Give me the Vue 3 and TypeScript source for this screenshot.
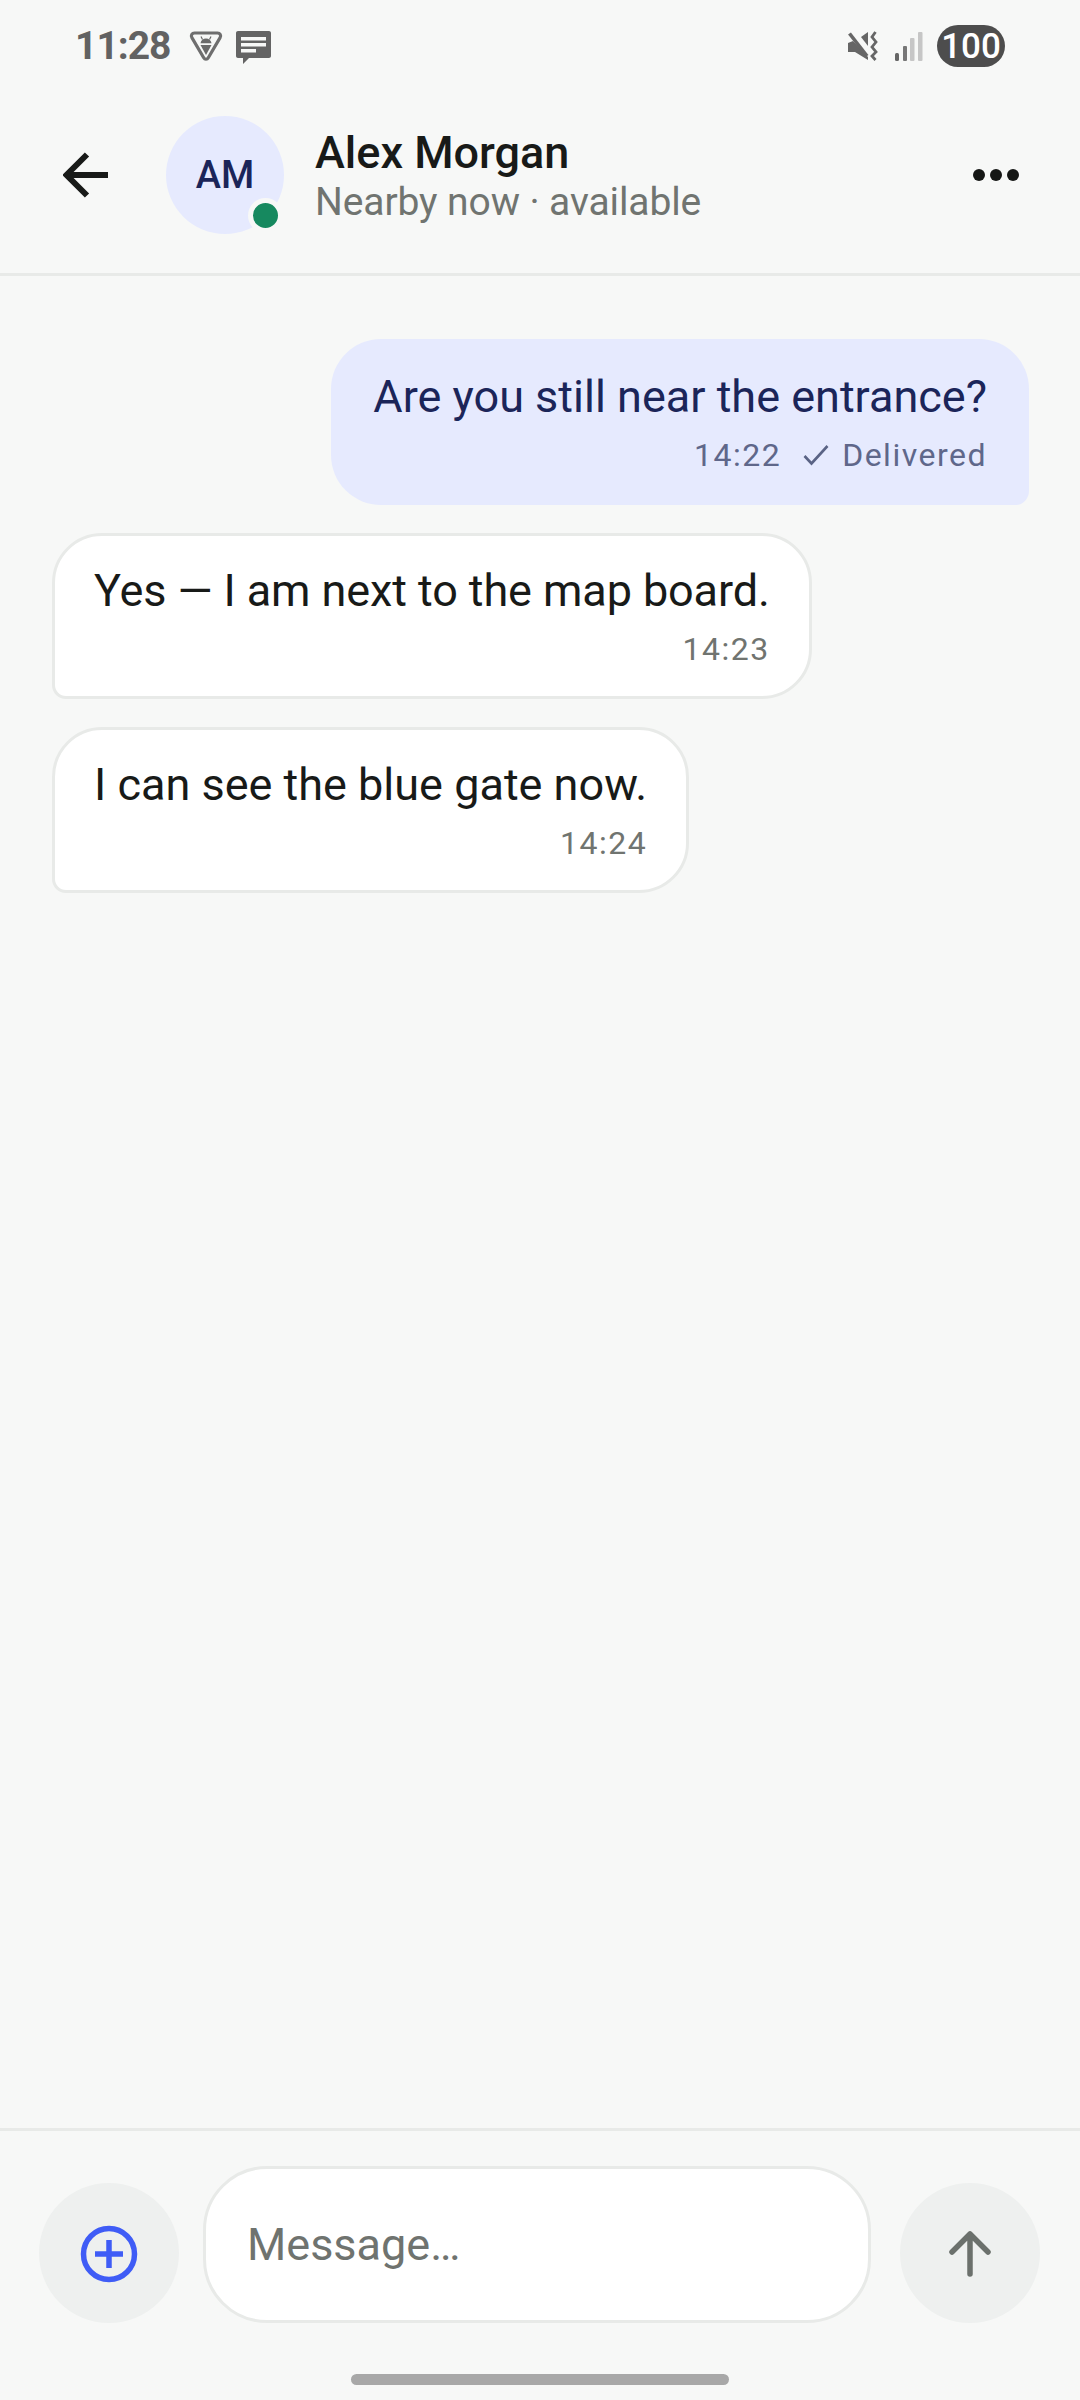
<script setup lang="ts">
interface Message {
  id: number
  text: string
  time: string
  mine: boolean
  status?: string
}

const messages: Message[] = [
  { id: 1, text: 'Are you still near the entrance?', time: '14:22', mine: true, status: 'Delivered' },
  { id: 2, text: 'Yes — I am next to the map board.', time: '14:23', mine: false },
  { id: 3, text: 'I can see the blue gate now.', time: '14:24', mine: false }
]
</script>

<template>
  <div class="screen">
    <div class="status-bar">
      <span class="clock">11:28</span>
      <svg class="shield" width="34" height="31" viewBox="0 0 34 31">
        <path d="M5.500 2h23c2.600 0 3.900 2.500 2.600 4.600L19.300 26.800c-1.100 1.900-3.500 1.900-4.600 0L2.900 6.600C1.600 4.500 2.900 2 5.500 2z" fill="none" stroke="#6e6e6e" stroke-width="3.200" />
        <path d="M11.500 12.200c.4-2.800 2.700-4.700 5.500-4.700s5.100 1.900 5.500 4.700z" fill="#6a6a6a" />
        <path d="M13.500 8.500 12 5.500M20.500 8.500 22 5.500" stroke="#6a6a6a" stroke-width="1.200" />
        <path d="M11.500 14h11L17 24z" fill="#6a6a6a" />
      </svg>
      <svg class="chat" width="35" height="33" viewBox="0 0 35 33">
        <path d="M2 0h31c1.100 0 2 .9 2 2v23c0 1.100-.9 2-2 2H13l-6 6v-6H2c-1.100 0-2-.9-2-2V2C0 .9.9 0 2 0z" fill="#646464" />
        <rect x="5" y="6" width="25" height="3.500" fill="#f7f8f7" />
        <rect x="5" y="12" width="25" height="3.500" fill="#f7f8f7" />
        <rect x="5" y="18" width="15" height="3.500" fill="#f7f8f7" />
      </svg>
      <span class="status-gap"></span>
      <svg class="mute" width="30" height="30" viewBox="0 0 30 30">
        <path d="M13 6l7-5v14z" fill="#666" />
        <path d="M0 12l5-2 15 16v3L7 21H0z" fill="#666" />
        <path d="M1.500 2.500 19 25" stroke="#666" stroke-width="3.600" />
        <path d="M27.500 1 24 6l4 5-4 5 4 5-4 4 3.500 4" fill="none" stroke="#666" stroke-width="2.800" />
      </svg>
      <svg class="signal" width="28" height="29" viewBox="0 0 28 29">
        <rect x="0" y="21" width="4" height="8" rx="1.500" fill="#666" />
        <rect x="8" y="14" width="4" height="15" rx="1" fill="#777" />
        <rect x="15" y="6" width="4.500" height="23" rx="1" fill="#c6c6c6" />
        <rect x="23" y="0" width="4.500" height="29" rx="1" fill="#c6c6c6" />
      </svg>
      <span class="battery">100</span>
    </div>

    <header class="top-bar">
      <button class="back" aria-label="Back">
        <svg width="46" height="46" viewBox="0 0 46 46">
          <path d="M45 23H4M24 2.500 3.500 23 24 43.500" fill="none" stroke="#181a18" stroke-width="6" />
        </svg>
      </button>
      <div class="avatar">
        AM
        <span class="presence"></span>
      </div>
      <div class="contact">
        <div class="name">Alex Morgan</div>
        <div class="sub">Nearby now · available</div>
      </div>
      <div class="more">
        <i></i><i></i><i></i>
      </div>
    </header>

    <main class="thread">
      <div v-for="m in messages" :key="m.id" class="bubble" :class="m.mine ? 'mine' : 'theirs'">
        <div class="text" :class="{ tight: m.id === 2 }">{{ m.text }}</div>
        <div class="meta">
          <span>{{ m.time }}</span>
          <span v-if="m.status" class="receipt">
            <svg width="26" height="22" viewBox="0 0 26 22">
              <path d="M1.500 12l7 7.500L24.500 2" fill="none" stroke="#5a6385" stroke-width="2.600" />
            </svg>
            {{ m.status }}
          </span>
        </div>
      </div>
    </main>

    <footer class="composer">
      <button class="round plus" aria-label="Attach">
        <svg width="58" height="58" viewBox="0 0 58 58">
          <circle cx="29" cy="29" r="25.500" fill="none" stroke="#3f5cf6" stroke-width="5.500" />
          <path d="M29 15v28M15 29h28" fill="none" stroke="#3f5cf6" stroke-width="5.500" />
        </svg>
      </button>
      <div class="field"><span>Message…</span></div>
      <button class="round send" aria-label="Send">
        <svg width="48" height="50" viewBox="0 0 48 50">
          <path d="M24 45V5M6 23 24 5l18 18" fill="none" stroke="#6b706c" stroke-width="5.500" stroke-linecap="round" stroke-linejoin="round" />
        </svg>
      </button>
    </footer>
    <div class="home-area"><div class="home-bar"></div></div>
  </div>
</template>

<style>
html, body {
  margin: 0;
  background: #f7f8f7;
}
</style>

<style scoped>
.screen {
  width: 1080px;
  height: 2400px;
  display: flex;
  flex-direction: column;
  background: #f7f8f7;
  font-family: Roboto, "Liberation Sans", sans-serif;
  color: #181a18;
}

.status-bar {
  height: 92px;
  box-sizing: border-box;
  padding: 0 75px 0 75px;
  display: flex;
  align-items: center;
}
.clock {
  font-size: 39px;
  font-weight: 700;
  letter-spacing: -1px;
  color: #626262;
  margin-right: 18px;
}
.shield { margin-right: 13px; }
.chat { margin-top: 3px; }
.status-gap { flex: 1; }
.signal { margin-left: 17px; }
.battery {
  margin-left: 14px;
  width: 68px;
  height: 42px;
  border-radius: 21px;
  background: #4d4d4d;
  color: #fff;
  font-size: 35px;
  font-weight: 500;
  display: flex;
  align-items: center;
  justify-content: center;
}

.top-bar {
  height: 184px;
  box-sizing: border-box;
  border-bottom: 3px solid #e8eae8;
  display: flex;
  align-items: center;
  padding: 0 61px 16px 63px;
}
.back {
  padding: 0;
  border: 0;
  background: none;
  width: 46px;
  height: 46px;
  margin-right: 57px;
}
.back svg { display: block; }
.avatar {
  position: relative;
  width: 118px;
  height: 118px;
  border-radius: 50%;
  background: #e6eafe;
  color: #1b2559;
  font-size: 38px;
  font-weight: 500;
  display: flex;
  align-items: center;
  justify-content: center;
  margin-right: 31px;
}
.presence {
  position: absolute;
  right: 1px;
  bottom: 1px;
  width: 25px;
  height: 25px;
  border-radius: 50%;
  background: #16895f;
  border: 5px solid #f7f8f7;
}
.contact {
  flex: 1;
  padding-top: 4px;
}
.name {
  font-size: 45px;
  font-weight: 500;
  line-height: 50px;
}
.sub {
  font-size: 39px;
  line-height: 48px;
  letter-spacing: -0.1px;
  color: #707470;
}
.more {
  display: flex;
  gap: 5px;
}
.more i {
  width: 12px;
  height: 12px;
  border-radius: 50%;
  background: #151715;
}

.thread {
  flex: 1;
  display: flex;
  flex-direction: column;
  padding: 63px 51px 0 52px;
  gap: 28px;
}
.bubble {
  box-sizing: border-box;
  height: 166px;
  padding: 29px 42px 0;
  border-radius: 50px;
}
.bubble.mine {
  align-self: flex-end;
  background: #e6eafe;
  color: #1b2559;
  border-bottom-right-radius: 14px;
}
.bubble.theirs {
  align-self: flex-start;
  background: #fff;
  border: 3px solid #e8eae8;
  padding: 26px 39px 0;
  border-bottom-left-radius: 14px;
}
.text {
  font-size: 45px;
  line-height: 58px;
}
.text.tight { letter-spacing: -0.1px; }
.meta {
  margin-top: 10px;
  display: flex;
  justify-content: flex-end;
  align-items: center;
  gap: 22px;
  font-size: 32px;
  line-height: 38px;
  letter-spacing: 1.500px;
  color: #707470;
}
.mine .meta { color: #5f678a; }
.receipt {
  display: flex;
  align-items: center;
  gap: 13px;
}

.composer {
  box-sizing: border-box;
  height: 195px;
  border-top: 3px solid #e8eae8;
  display: flex;
  align-items: flex-end;
  padding: 0 40px 0 39px;
  flex-shrink: 0;
}
.round {
  width: 140px;
  height: 140px;
  border: 0;
  padding: 0;
  border-radius: 50%;
  background: #eef0ef;
  display: flex;
  align-items: center;
  justify-content: center;
  flex-shrink: 0;
}
.round svg { margin-top: 2px; }
.field {
  box-sizing: border-box;
  flex: 1;
  height: 157px;
  margin: 0 29px 0 24px;
  border: 3px solid #e8eae8;
  border-radius: 64px;
  background: #fff;
  display: flex;
  align-items: center;
  padding-left: 41px;
  font-size: 45px;
  color: #6f736f;
}
.home-area {
  height: 77px;
  display: flex;
  justify-content: center;
  padding-top: 51px;
  box-sizing: border-box;
  flex-shrink: 0;
}
.home-bar {
  width: 378px;
  height: 11px;
  border-radius: 6px;
  background: #a8a8a8;
}
</style>
